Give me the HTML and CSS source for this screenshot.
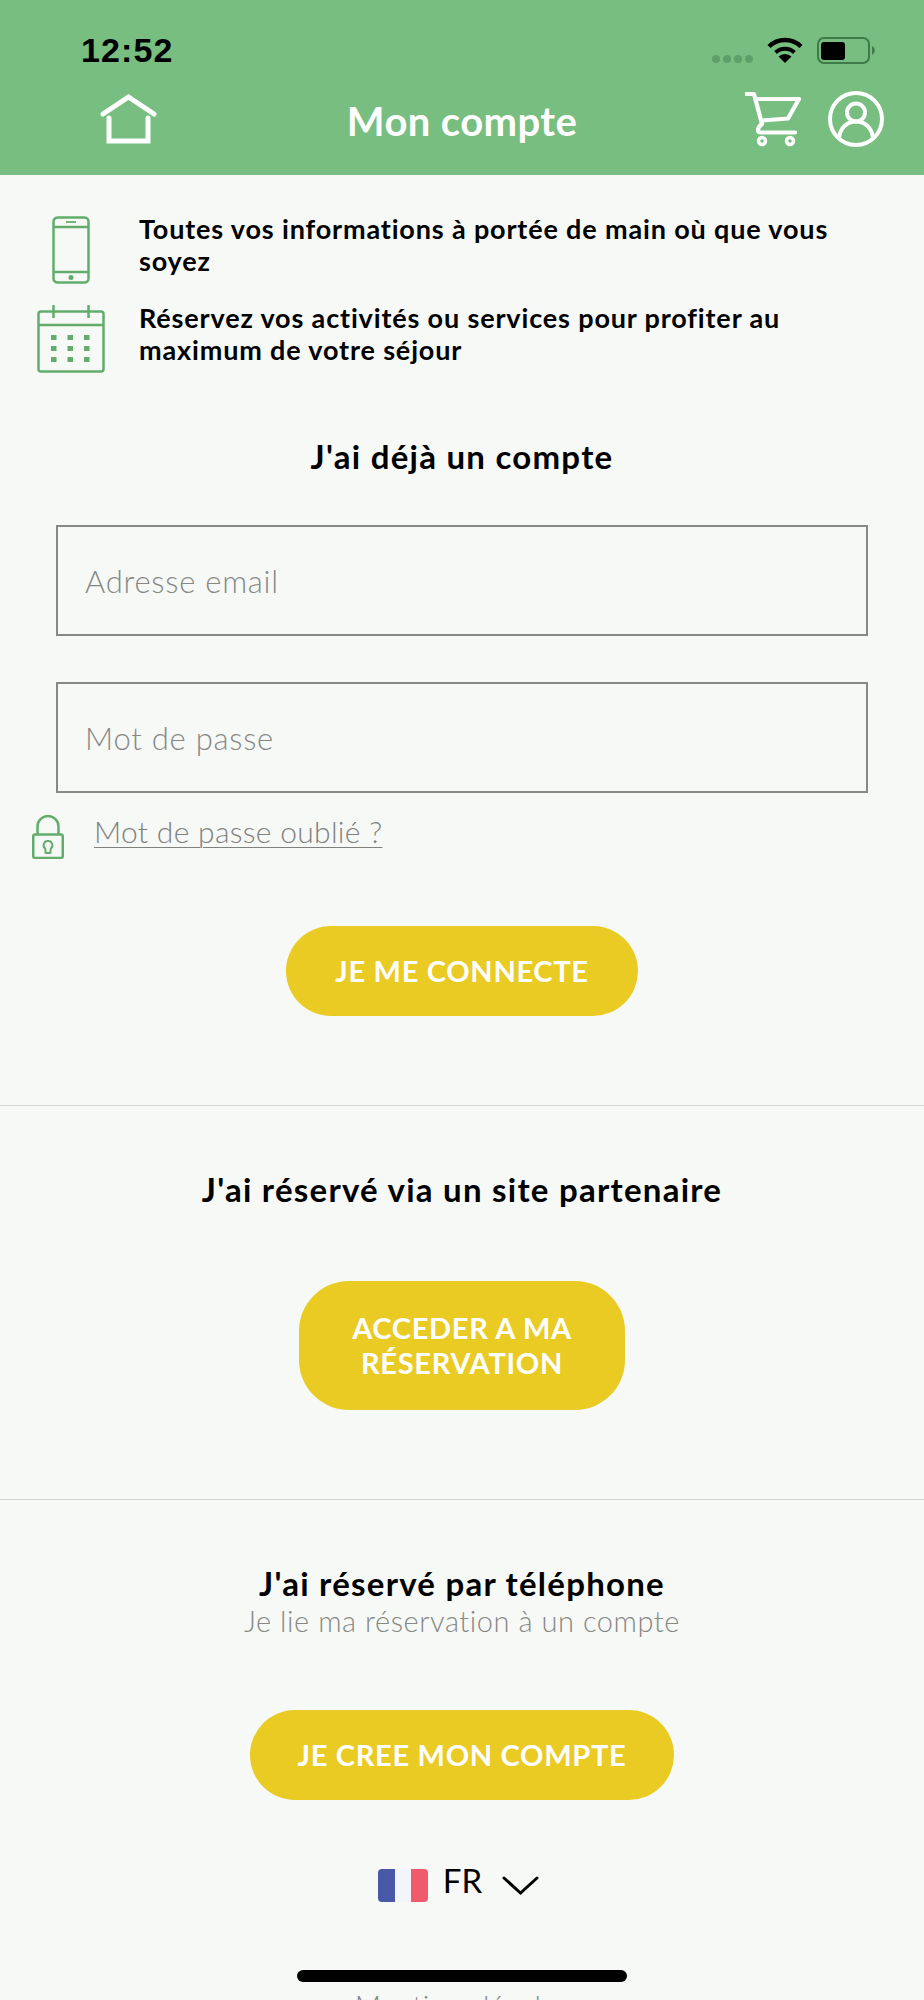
FILE: index.html
```html
<!DOCTYPE html>
<html lang="fr">
<head>
<meta charset="utf-8">
<title>Mon compte</title>
<link rel="stylesheet" href="styles.css">
</head>
<body>
<div class="app">
  <header class="header">
    <div class="status">
      <span class="time">12:52</span>
      <div class="status-icons">
        <span class="dots"><i></i><i></i><i></i><i></i></span>
        <svg width="36" height="26" viewBox="0 0 36 26"><path d="M2 9.500 A23 23 0 0 1 34 9.500" fill="none" stroke="#000" stroke-width="4.500"/><path d="M8.500 15.500 A14 14 0 0 1 27.500 15.500" fill="none" stroke="#000" stroke-width="4"/><path d="M18 26 L11.500 19.500 A9.500 9.500 0 0 1 24.500 19.500 Z" fill="#000"/></svg>
        <svg width="59" height="27" viewBox="0 0 59 27"><rect x="1" y="1" width="51" height="25" rx="6" fill="none" stroke="#3f7a4a" stroke-width="2"/><rect x="4" y="5" width="24" height="18" rx="3" fill="#000"/><path d="M55 9 A5 5 0 0 1 55 18 Z" fill="#3f7a4a"/></svg>
      </div>
    </div>
    <nav class="nav">
      <div class="nav-left">
        <svg width="57" height="50" viewBox="0 0 57 50"><path d="M3 20 L28.500 3 L54 20" fill="none" stroke="#fff" stroke-width="5" stroke-linecap="round"/><path d="M9 24 V47 H48 V24" fill="none" stroke="#fff" stroke-width="5" stroke-linecap="round"/></svg>
      </div>
      <h1 class="title">Mon compte</h1>
      <div class="nav-right">
        <svg width="56" height="56" viewBox="0 0 56 56"><path d="M1 3 H9 L17 33 Q13 36 13 39 Q13 41.500 16 41.500 H50" fill="none" stroke="#fff" stroke-width="4.200" stroke-linejoin="round" stroke-linecap="round"/><path d="M10 8 H54 L43 27.500 L17 29.500" fill="none" stroke="#fff" stroke-width="4.200" stroke-linejoin="round"/><circle cx="17" cy="50" r="3.500" fill="none" stroke="#fff" stroke-width="3.500"/><circle cx="45" cy="50" r="3.500" fill="none" stroke="#fff" stroke-width="3.500"/></svg>
        <svg width="56" height="56" viewBox="0 0 56 56"><circle cx="28" cy="28" r="26" fill="none" stroke="#fff" stroke-width="4"/><circle cx="28" cy="21.500" r="9" fill="none" stroke="#fff" stroke-width="4"/><path d="M11 47 C12 37 19 30.500 28 30.500 C37 30.500 44 37 45 47" fill="none" stroke="#fff" stroke-width="4"/></svg>
      </div>
    </nav>
  </header>

  <main>
    <section class="intro">
      <div class="intro-row">
        <div class="intro-icon">
          <svg width="38" height="68" viewBox="0 0 38 68"><rect x="1.500" y="1.500" width="35" height="65" rx="4" fill="none" stroke="#62ad6c" stroke-width="2.500"/><path d="M1.500 11 H36.500 M1.500 56 H36.500" stroke="#62ad6c" stroke-width="2.500"/><path d="M14 6 H24" stroke="#62ad6c" stroke-width="1.800"/><circle cx="19" cy="61.500" r="2.500" fill="#62ad6c"/></svg>
        </div>
        <p class="intro-text">Toutes vos informations à portée de main où que vous soyez</p>
      </div>
      <div class="intro-row">
        <div class="intro-icon">
          <svg width="68" height="68" viewBox="0 0 68 68"><rect x="1.500" y="6.500" width="65" height="60" rx="2.500" fill="none" stroke="#62ad6c" stroke-width="2.500"/><path d="M1.500 20 H66.500 M16.500 0 V13 M51.500 0 V13" stroke="#62ad6c" stroke-width="2.500"/><g fill="#62ad6c"><rect x="14" y="30" width="5.500" height="5"/><rect x="30.500" y="30" width="5.500" height="5"/><rect x="47" y="30" width="5.500" height="5"/><rect x="14" y="41" width="5.500" height="5"/><rect x="30.500" y="41" width="5.500" height="5"/><rect x="47" y="41" width="5.500" height="5"/><rect x="14" y="52" width="5.500" height="5"/><rect x="30.500" y="52" width="5.500" height="5"/><rect x="47" y="52" width="5.500" height="5"/></g></svg>
        </div>
        <p class="intro-text">Réservez vos activités ou services pour profiter au maximum de votre séjour</p>
      </div>
    </section>

    <section class="login">
      <h2 class="heading">J'ai déjà un compte</h2>
      <div class="fields">
        <div class="field">Adresse email</div>
        <div class="field">Mot de passe</div>
      </div>
      <div class="forgot">
        <svg width="32" height="44" viewBox="0 0 32 44"><rect x="1.250" y="19.500" width="29.500" height="23.500" rx="2" fill="none" stroke="#62ad6c" stroke-width="2.500"/><path d="M5.500 19.500 V11.500 A10.500 10.500 0 0 1 26.500 11.500 V19.500" fill="none" stroke="#62ad6c" stroke-width="2.500"/><path d="M16 26 A4.200 4.200 0 0 1 18.800 33.500 L18.300 38 H13.700 L13.200 33.500 A4.200 4.200 0 0 1 16 26 Z" fill="none" stroke="#62ad6c" stroke-width="2"/></svg>
        <a class="forgot-link">Mot de passe oublié ?</a>
      </div>
      <div class="btn btn-login">JE ME CONNECTE</div>
    </section>

    <section class="partner">
      <h2 class="heading">J'ai réservé via un site partenaire</h2>
      <div class="btn btn-partner">ACCEDER A MA RÉSERVATION</div>
    </section>

    <section class="phone">
      <h2 class="heading">J'ai réservé par téléphone</h2>
      <p class="sub">Je lie ma réservation à un compte</p>
      <div class="btn btn-create">JE CREE MON COMPTE</div>
      <div class="lang">
        <span class="flag"><i class="blue"></i><i class="white"></i><i class="red"></i></span>
        <span class="lang-code">FR</span>
        <svg width="37" height="21" viewBox="0 0 37 21"><path d="M2 3 L18.500 18 L35 3" fill="none" stroke="#000" stroke-width="3" stroke-linecap="round"/></svg>
      </div>
      <p class="legal">Mentions légales</p>
    </section>
  </main>
  <div class="home-bar"></div>
</div>
</body>
</html>
```
FILE: styles.css
```css
html, body { margin: 0; padding: 0; height: 2000px; overflow: hidden; }
body { background: #f7f9f6; font-family: "Lato", "Liberation Sans", sans-serif; color: #000; }
.app { position: relative; width: 924px; height: 2000px; overflow: hidden; }
p, h1, h2 { margin: 0; }

.header { height: 175px; background: #77be80; box-sizing: border-box; padding-top: 30px; }
.status { display: flex; justify-content: space-between; align-items: center; height: 40px; padding: 0 48px 0 81px; }
.time { font-family: "Liberation Sans", sans-serif; font-weight: 700; font-size: 34px; letter-spacing: 1.1px; }
.status-icons { display: flex; align-items: center; gap: 14px; }
.dots { display: flex; gap: 3px; margin-top: 18px; }
.dots i { width: 8px; height: 8px; border-radius: 50%; background: #5f9f6a; }
.nav { display: grid; grid-template-columns: 1fr auto 1fr; align-items: center; height: 72px; margin-top: 13px; }
.nav-left { display: flex; padding-left: 100px; }
.title { font-size: 40px; font-weight: 700; color: #fff; letter-spacing: 0.4px; margin-top: 4px; }
.nav-right { display: flex; align-items: center; justify-content: flex-end; gap: 27px; padding-right: 40px; }

.intro { padding: 41px 0 0 36px; display: flex; flex-direction: column; gap: 21px; }
.intro-row { display: flex; align-items: center; gap: 34px; }
.intro-icon { width: 69px; display: flex; justify-content: center; }
.intro-text { width: 695px; font-size: 27px; font-weight: 700; line-height: 32.500px; letter-spacing: 0.85px; margin-top: -10px; }

.heading { font-size: 33px; font-weight: 700; text-align: center; line-height: 38px; letter-spacing: 1.25px; }
.login { padding-top: 64px; height: 733px; box-sizing: border-box; border-bottom: 1px solid #d3d5d2; }
.fields { display: flex; flex-direction: column; gap: 46px; margin: 50px 56px 0; }
.field { height: 111px; box-sizing: border-box; border: 2px solid #888; padding-left: 27px; display: flex; align-items: center; font-size: 31px; font-weight: 300; color: #868886; letter-spacing: 0.75px; }
.forgot { display: flex; align-items: center; gap: 30px; margin: 22px 0 0 32px; }
.forgot-link { font-size: 30px; font-weight: 300; color: #7f817f; text-decoration: underline; text-underline-offset: 4px; text-decoration-thickness: 1px; letter-spacing: 0.3px; margin-top: -13px; }

.btn { background: #e9cb23; color: #fff; font-weight: 700; font-size: 29px; letter-spacing: 0.7px; text-align: center; display: flex; align-items: center; justify-content: center; box-sizing: border-box; margin: 0 auto; line-height: 34.500px; }
.btn-login { width: 352px; height: 90px; border-radius: 45px; margin-top: 67px; }
.partner { height: 394px; box-sizing: border-box; padding-top: 64px; border-bottom: 1px solid #d3d5d2; }
.btn-partner { width: 326px; height: 129px; border-radius: 50px; margin-top: 73px; padding: 0 40px; }
.phone { padding-top: 64px; }
.sub { text-align: center; font-size: 29px; font-weight: 300; color: #868886; line-height: 34px; letter-spacing: 0.55px; margin-top: 2px; }
.btn-create { width: 424px; height: 90px; border-radius: 45px; margin-top: 72px; }
.lang { display: flex; justify-content: center; align-items: center; gap: 15px; margin-top: 60px; height: 50px; padding-right: 7px; }
.flag { display: flex; width: 50px; height: 33px; border-radius: 4px; overflow: hidden; }
.flag i { flex: 1; }
.flag .blue { background: #4a58a8; }
.flag .white { background: #f3f5fb; }
.flag .red { background: #f05a6c; }
.lang-code { font-size: 33px; font-weight: 400; margin-top: -11px; }
.lang svg { margin-left: 5px; }
.legal { text-align: center; font-size: 29px; font-weight: 300; color: #868886; margin-top: 78px; letter-spacing: 0.3px; }
.home-bar { position: absolute; left: 297px; top: 1970px; width: 330px; height: 12px; border-radius: 6px; background: #000; }
```
